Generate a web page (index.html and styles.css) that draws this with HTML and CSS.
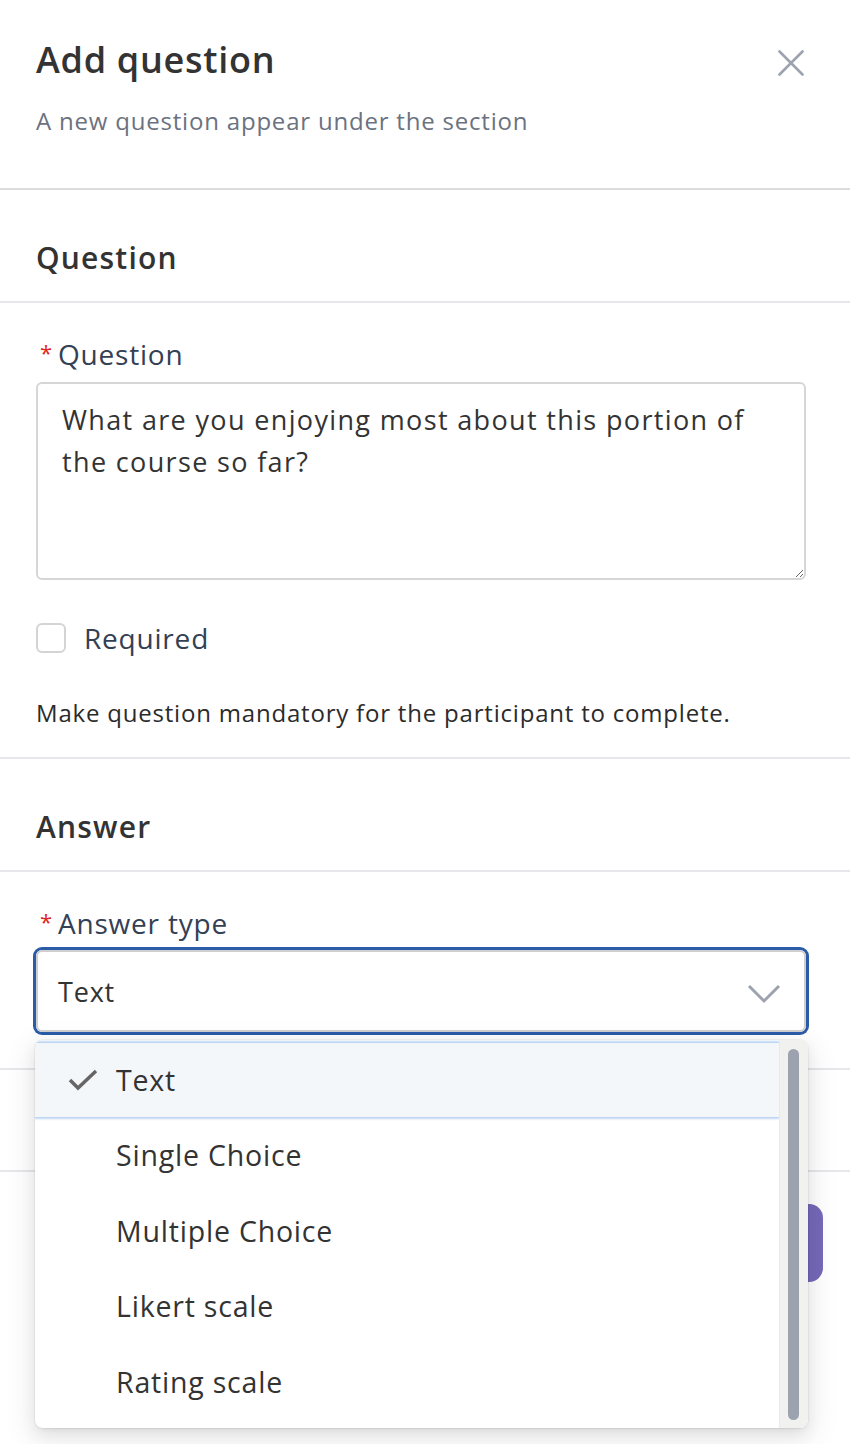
FILE: index.html
```html
<!DOCTYPE html>
<html>
	<head>
		<meta charset="utf-8">
		<title>Add question</title>
		<link rel="stylesheet" href="styles.css">
	</head>
	<body>
		<div class="panel">
			<div class="head">
				<div>
					<h1>Add question</h1>
					<p class="sub">A new question appear under the section</p>
				</div>
				<button class="close" aria-label="Close">
					<svg width="26" height="26" viewBox="0 0 26 26"><path d="M1.5 1.5L24.5 24.5M24.5 1.5L1.5 24.5" stroke="#9ca3af" stroke-width="2.6" fill="none" stroke-linecap="round"/></svg>
				</button>
			</div>

			<div class="sec-title"><h2>Question</h2></div>
			<div class="sec">
				<label class="lbl"><span class="req">*</span>Question</label>
				<textarea class="ta">What are you enjoying most about this portion of the course so far?</textarea>
				<label class="check-row">
					<input type="checkbox" class="cb">
					<span>Required</span>
				</label>
				<p class="desc">Make question mandatory for the participant to complete.</p>
			</div>

			<div class="sec-title"><h2>Answer</h2></div>
			<div class="sec sec-answer">
				<label class="lbl"><span class="req">*</span>Answer type</label>
				<div class="select-wrap">
					<div class="select">
						<span>Text</span>
						<svg width="34" height="20" viewBox="0 0 34 20"><polyline points="2,2 17,17 32,2" stroke="#9ca3af" stroke-width="3" fill="none"/></svg>
					</div>
					<!-- open dropdown -->
					<div class="dropdown">
						<ul class="opts">
							<li class="opt sel">
								<svg class="tick" width="30" height="22" viewBox="0 0 30 22"><polyline points="2,11 10,19 28,2" stroke="#666" stroke-width="3.5" fill="none"/></svg>
								Text
							</li>
							<li class="opt">Single Choice</li>
							<li class="opt">Multiple Choice</li>
							<li class="opt">Likert scale</li>
							<li class="opt">Rating scale</li>
						</ul>
						<div class="track"><div class="thumb"></div></div>
					</div>
				</div>
			</div>

			<div class="sec sec-hidden"></div>

			<div class="foot">
				<button class="btn">Add question</button>
			</div>
		</div>
	</body>
</html>
```

FILE: styles.css
```css
*{margin:0;padding:0;box-sizing:border-box;}
ul li{list-style:none;}
body{font-family:"Open Sans","Noto Sans",sans-serif;color:#333;background:#fff;letter-spacing:.05em;}
.panel{width:850px;min-height:1444px;}

.head{display:flex;justify-content:space-between;align-items:flex-start;height:190px;padding:38px 36px 0;border-bottom:2px solid #dcdcdc;}
.head h1{font-size:36px;font-weight:600;line-height:44px;letter-spacing:.02em;color:#333;}
.head .sub{margin-top:23px;font-size:24px;line-height:32px;color:#6b7280;}
.close{border:0;background:none;width:26px;height:26px;margin:12px 10px 0 0;display:block;}
.close svg{display:block;}

.sec-title{height:113px;padding:48px 36px 0;border-bottom:2px solid #e6e7ea;}
.sec-title h2{font-size:30px;font-weight:600;line-height:40px;letter-spacing:.04em;color:#333;}

.sec{padding:33px 44px 28px 36px;border-bottom:2px solid #e6e7ea;}
.lbl{display:block;font-size:28px;line-height:36px;color:#344054;padding-left:4px;}
.req{color:#e02424;font-size:22px;margin-right:5px;vertical-align:top;position:relative;top:-2px;}

.ta{display:block;width:770px;height:198px;margin-top:10px;padding:15px 40px 0 24px;border:2px solid #d6d6d6;border-radius:6px;font-family:inherit;font-size:27px;line-height:42px;letter-spacing:.05em;color:#333;resize:vertical;outline:none;}

.check-row{display:flex;align-items:center;gap:18px;margin-top:43px;font-size:28px;line-height:30px;color:#344054;}
.cb{appearance:none;width:30px;height:30px;border:2px solid #d4d4d4;border-radius:6px;background:#fff;margin:0;}
.desc{margin-top:43px;font-size:24px;line-height:33px;color:#2b2b2b;}

.sec-answer{padding-bottom:36px;}
.select-wrap{position:relative;margin-top:9px;}
.select{display:flex;align-items:center;justify-content:space-between;height:82px;padding:0 23px 0 20px;border:2px solid #cfcfcf;border-radius:6px;box-shadow:0 0 0 3px #2a5ca8;font-size:27px;color:#333;}
.select svg{display:block;margin-top:6px;}

.dropdown{position:absolute;z-index:5;top:calc(100% + 8px);left:-1px;width:773px;height:388px;display:flex;background:#fff;border-radius:8px;overflow:hidden;box-shadow:0 6px 16px 0 rgba(0,0,0,.08),0 3px 6px -4px rgba(0,0,0,.12),0 9px 28px 8px rgba(0,0,0,.06),0 0 0 1px rgba(0,0,0,.04);}
.opts{flex:1;padding-top:2px;}
.opt{display:flex;align-items:center;height:75.5px;padding-left:81px;font-size:28.5px;color:#333;}
.opt.sel{padding-left:33px;background:#f4f7fa;border-top:1px solid #bcd5f2;border-bottom:1px solid #bcd5f2;box-shadow:0 1px 2px rgba(90,145,220,.35),0 -1px 2px rgba(90,145,220,.35);}
.tick{display:block;margin-right:18px;}
.track{width:29px;display:flex;padding:9px 9px 8px 8px;background:#f1f2f0;border-left:1px solid #e9eaea;}
.thumb{flex:1;background:#9ca3af;border-radius:6px;}

.sec-hidden{height:102px;padding:0;}

.foot{display:flex;justify-content:flex-end;padding:32px 27px 0;}
.btn{width:220px;height:78px;border:0;border-radius:14px;background:#7569b9;color:#fff;font-family:inherit;font-size:24px;font-weight:600;}
```
